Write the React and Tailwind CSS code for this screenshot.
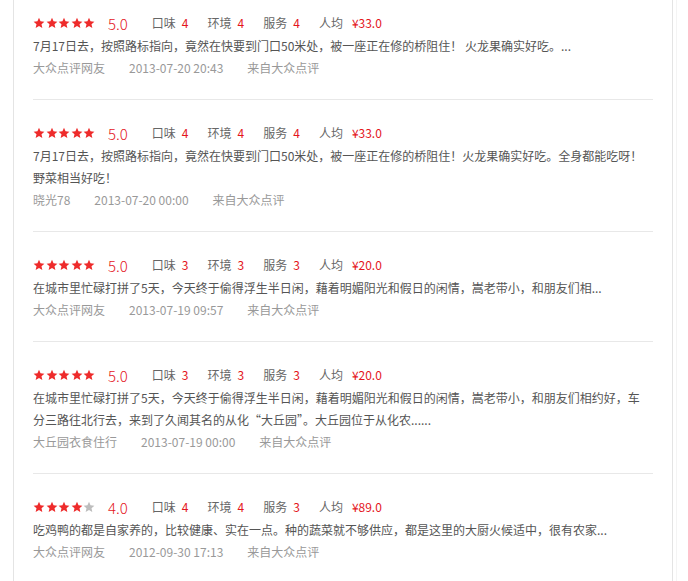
import React from 'react';

const reviews = [
  {
    stars: 5, score: '5.0', taste: 4, env: 4, service: 4, price: '¥33.0',
    text: ['7月17日去，按照路标指向，竟然在快要到门口50米处，被一座正在修的桥阻住！ 火龙果确实好吃。...'],
    user: '大众点评网友', time: '2013-07-20 20:43',
  },
  {
    stars: 5, score: '5.0', taste: 4, env: 4, service: 4, price: '¥33.0',
    text: ['7月17日去，按照路标指向，竟然在快要到门口50米处，被一座正在修的桥阻住！火龙果确实好吃。全身都能吃呀！', '野菜相当好吃！'],
    user: '晓光78', time: '2013-07-20 00:00',
  },
  {
    stars: 5, score: '5.0', taste: 3, env: 3, service: 3, price: '¥20.0',
    text: ['在城市里忙碌打拼了5天，今天终于偷得浮生半日闲，藉着明媚阳光和假日的闲情，嵩老带小，和朋友们相...'],
    user: '大众点评网友', time: '2013-07-19 09:57',
  },
  {
    stars: 5, score: '5.0', taste: 3, env: 3, service: 3, price: '¥20.0',
    text: ['在城市里忙碌打拼了5天，今天终于偷得浮生半日闲，藉着明媚阳光和假日的闲情，嵩老带小，和朋友们相约好，车', '分三路往北行去，来到了久闻其名的从化“大丘园”。大丘园位于从化农......'],
    user: '大丘园衣食住行', time: '2013-07-19 00:00',
  },
  {
    stars: 4, score: '4.0', taste: 4, env: 4, service: 3, price: '¥89.0',
    text: ['吃鸡鸭的都是自家养的，比较健康、实在一点。种的蔬菜就不够供应，都是这里的大厨火候适中，很有农家...'],
    user: '大众点评网友', time: '2012-09-30 17:13',
  },
];

const Star = ({ on }) => (
  <svg width="12" height="12" viewBox="0 0 24 24" className="shrink-0">
    <path
      d="M12 1.5l3.1 7.1 7.7.7-5.8 5.1 1.7 7.6L12 18l-6.7 4 1.7-7.6-5.8-5.1 7.7-.7z"
      fill={on ? '#ee2b2b' : '#bdbdbd'}
    />
  </svg>
);

const Score = ({ label, value }) => (
  <span className="flex items-center mr-[19px]">
    <span className="text-[#666]">{label}</span>
    <span className="ml-[6px] text-[#e4151c]">{value}</span>
  </span>
);

const Review = ({ r, first, last }) => (
  <div className={`${first ? 'pt-[11px]' : 'pt-[21px]'} ${last ? '' : 'pb-[20px] border-b border-[#e8e8e8]'}`}>
    <div className="flex items-center h-[24px] text-[12px]">
      <span className="flex gap-[0.5px]">
        {[0, 1, 2, 3, 4].map(i => <Star key={i} on={i < r.stars} />)}
      </span>
      <span className="ml-[13px] mr-[24px] text-[15px] font-light text-[#e4151c] leading-none">{r.score}</span>
      <Score label="口味" value={r.taste} />
      <Score label="环境" value={r.env} />
      <Score label="服务" value={r.service} />
      <span className="flex items-center">
        <span className="text-[#666]">人均</span>
        <span className="ml-[9px] text-[#e4151c]">{r.price}</span>
      </span>
    </div>
    {r.text.map((t, i) => (
      <p key={i} className="text-[12px] leading-[22px] text-[#555] whitespace-nowrap">{t}</p>
    ))}
    <div className="flex gap-[24px] text-[12px] leading-[22px] text-[#999]">
      <span>{r.user}</span>
      <span>{r.time}</span>
      <span>来自大众点评</span>
    </div>
  </div>
);

export default function App() {
  return (
    <div
      className="min-h-[581px] bg-white"
      style={{ fontFamily: '"Noto Sans CJK SC", "Noto Sans", sans-serif' }}
    >
      <div className="ml-[13px] w-[664px] min-h-[581px] border-r border-[#f4f4f4] pr-[3px]">
        <div className="min-h-[581px] border-x border-[#e4e4e4] px-[19px]">
          {reviews.map((r, i) => (
            <Review key={i} r={r} first={i === 0} last={i === reviews.length - 1} />
          ))}
        </div>
      </div>
    </div>
  );
}
